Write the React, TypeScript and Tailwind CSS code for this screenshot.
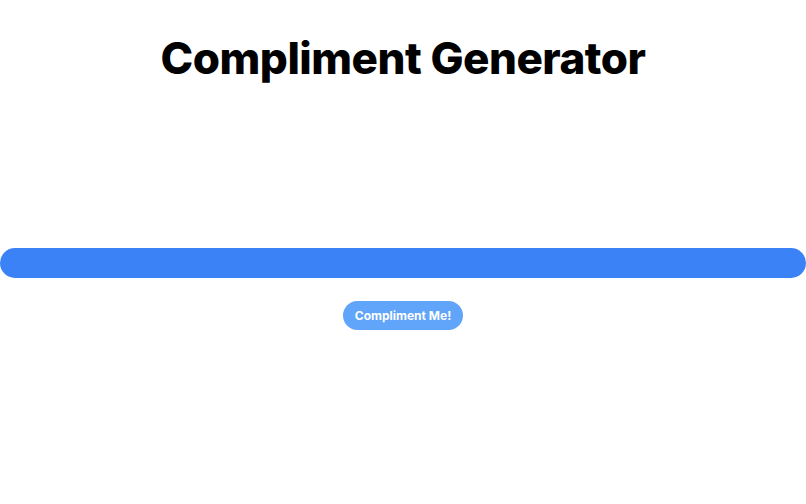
export default function App() {
  return (
    <div className="min-h-screen bg-white flex flex-col items-center" style={{ fontFamily: "Inter, 'Liberation Sans', sans-serif" }}>
      <h1 className="mt-[30px] text-[44px] leading-[56px] font-extrabold text-black tracking-[-0.5px]">Compliment Generator</h1>
      <div className="mt-[162px] w-full h-[30px] rounded-full bg-[#3b82f6]" />
      <button className="mt-[23px] h-[29px] px-[12px] rounded-full bg-[#60a5fa] text-white text-[12px] font-bold">
        Compliment Me!
      </button>
    </div>
  );
}
